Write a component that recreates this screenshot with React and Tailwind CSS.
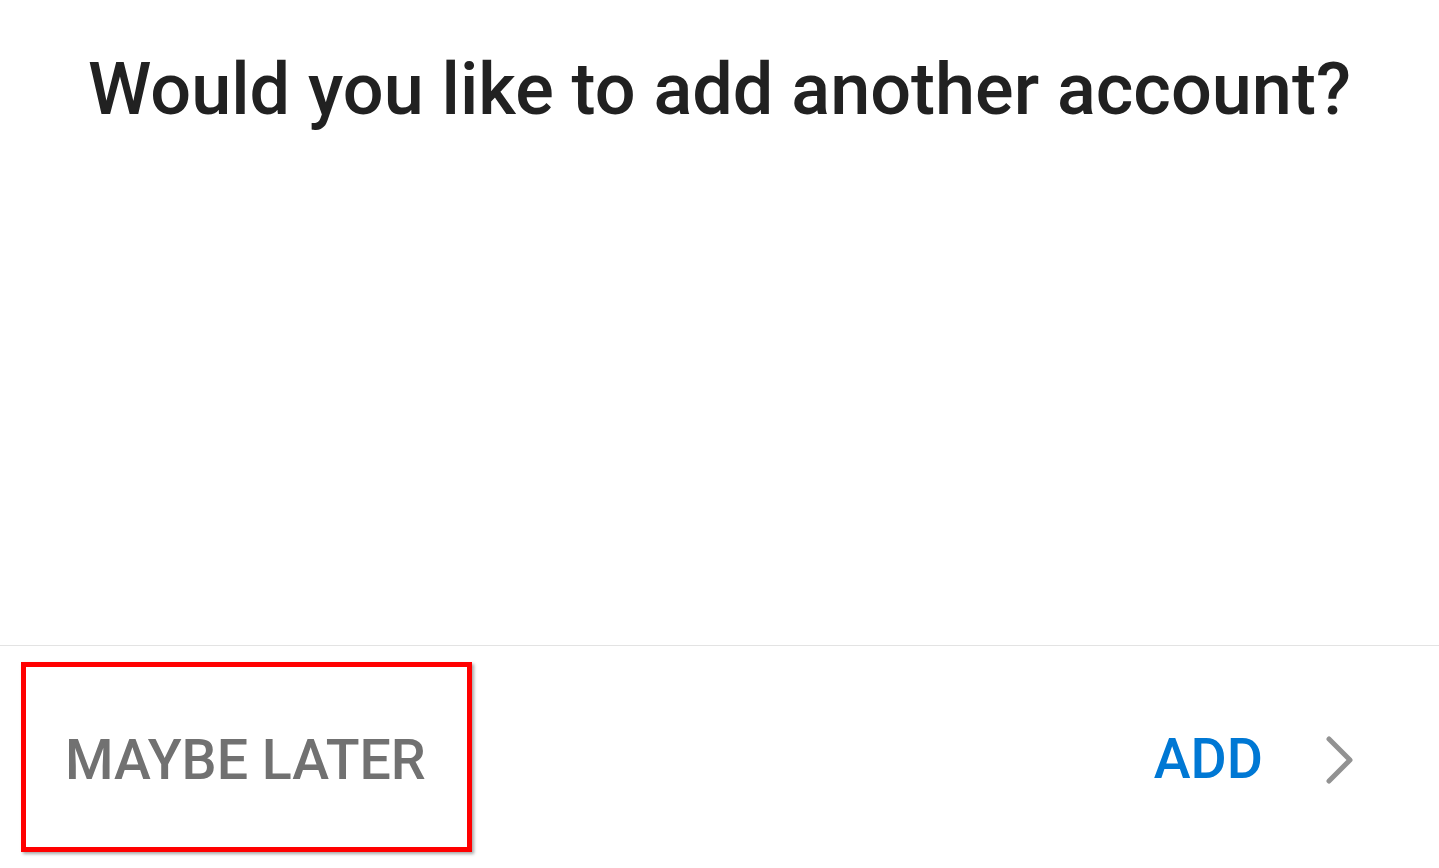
import React from "react";

function Chevron() {
  return (
    <svg width="34" height="54" viewBox="0 0 34 54" className="block">
      <path d="M6 6 L27 27 L6 48" fill="none" stroke="#929292" strokeWidth="5" strokeLinecap="round" strokeLinejoin="round" />
    </svg>
  );
}

export default function App() {
  return (
    <div className="h-[868px] w-[1439px] bg-white flex flex-col font-['Roboto',sans-serif]">
      <div className="flex-1 pt-[54px]">
        <h1 className="text-center text-[72px] leading-none font-medium text-[#212121]">
          Would you like to add another account?
        </h1>
      </div>
      <div className="h-[223px] border-t border-[#e3e3e3] flex items-center justify-between pl-[21px] pr-[82px]">
        <button className="w-[451px] h-[190px] border-[5px] border-[#ff0000] shadow-[2px_2px_3px_rgba(0,0,0,0.35)] flex items-center pl-[39px] pt-[8px] text-[55.5px] font-medium text-[#717171] leading-none">
          MAYBE LATER
        </button>
        <div className="flex items-center gap-[60px] pt-[6px]">
          <span className="text-[55.5px] font-medium text-[#0078d4] leading-none">ADD</span>
          <Chevron />
        </div>
      </div>
    </div>
  );
}
